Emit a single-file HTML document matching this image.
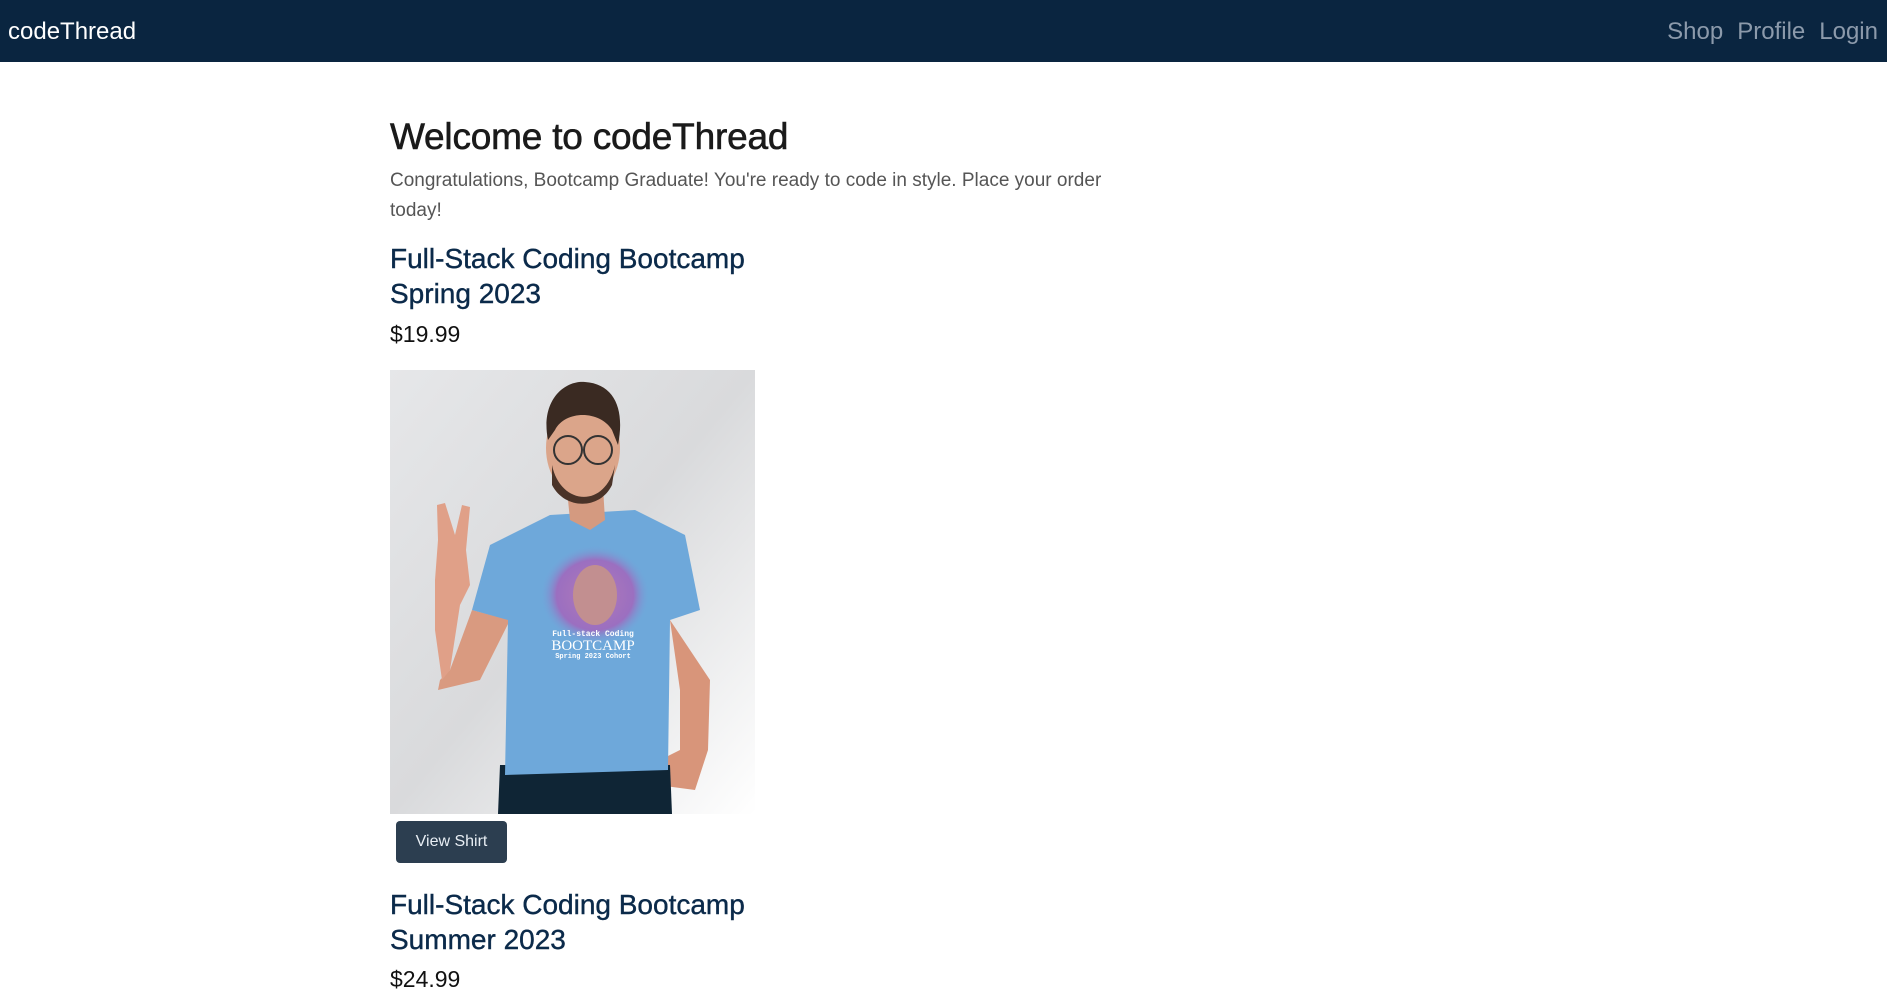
<!DOCTYPE html>
<html><head><meta charset="utf-8"><style>
*{box-sizing:border-box;margin:0;padding:0}
body{width:1887px;height:989px;overflow:hidden;background:#fff;font-family:"Liberation Sans",sans-serif;position:relative}
.nav{position:absolute;left:0;top:0;width:1887px;height:62px;background:#0a2540}
.brand{position:absolute;left:8px;top:18px;color:#fff;font-size:24px}
.links{position:absolute;right:9px;top:18px;color:#8c9aab;font-size:24px;word-spacing:0}
.links span{margin-left:14px}
.t{position:absolute;left:390px;white-space:nowrap}
h1{font-size:37px;font-weight:normal;color:#1a1a1a;letter-spacing:-0.2px;-webkit-text-stroke:0.6px #1a1a1a}
.p{font-size:19px;color:#555;font-weight:normal;line-height:30px}
.h{font-size:28px;color:#0b2a4a;line-height:35px;-webkit-text-stroke:0.4px #0b2a4a}
.pr{font-size:23px;color:#111}
.btn{position:absolute;left:396px;top:821px;width:111px;height:42px;background:#2c3e50;border-radius:4px;color:#e8eef4;font-size:16px;text-align:center;line-height:42px}
</style></head><body>
<div class="nav"><div class="brand">codeThread</div><div class="links"><span>Shop</span><span>Profile</span><span>Login</span></div></div>
<div class="t" style="top:116px"><h1>Welcome to codeThread</h1></div>
<div class="t p" style="top:166px">Congratulations, Bootcamp Graduate! You're ready to code in style. Place your order<br>today!</div>
<div class="t h" style="top:241px">Full-Stack Coding Bootcamp<br>Spring 2023</div>
<div class="t pr" style="top:321px">$19.99</div>
<svg style="position:absolute;left:390px;top:370px" width="365" height="444" viewBox="0 0 365 444">
<defs><linearGradient id="g" x1="0" y1="0" x2="1" y2="1"><stop offset="0" stop-color="#e6e7e9"/><stop offset="0.5" stop-color="#d9dadc"/><stop offset="1" stop-color="#ffffff"/></linearGradient>
<radialGradient id="pg"><stop offset="0" stop-color="#b27ab8"/><stop offset="0.7" stop-color="#9b6fc0"/><stop offset="1" stop-color="#6fa8dc" stop-opacity="0"/></radialGradient></defs>
<rect width="365" height="444" fill="url(#g)"/>
<path d="M82 240 L60 300 L50 310 L48 320 L90 310 L120 250 Z" fill="#d99a80"/>
<path d="M45 210 L48 170 L47 135 L55 133 L65 165 L72 135 L80 137 L76 180 L80 215 L70 235 L60 300 L52 310 L45 260 Z" fill="#e0a088"/>
<path d="M280 250 L320 310 L318 380 L305 420 L245 412 L260 395 L290 380 L290 320 Z" fill="#d8957a"/>
<path d="M110 395 L280 395 L282 444 L108 444 Z" fill="#0f2535"/>
<path d="M160 145 L245 140 L295 165 L310 240 L280 250 L278 400 L115 405 L118 250 L82 240 L100 175 Z" fill="#6ea8da"/>
<path d="M175 100 L212 100 L215 150 L200 160 L180 150 Z" fill="#d49a80"/>
<ellipse cx="193" cy="78" rx="37" ry="50" fill="#dba58a"/>
<path d="M158 70 C150 30 175 10 195 12 C225 14 235 40 228 75 L222 60 C210 40 175 40 165 60 Z" fill="#3a2a22"/>
<path d="M162 95 C170 135 215 140 225 95 L222 115 C210 140 175 140 162 115 Z" fill="#4a3328"/>
<circle cx="178" cy="80" r="14" fill="none" stroke="#333" stroke-width="2"/>
<circle cx="208" cy="80" r="14" fill="none" stroke="#333" stroke-width="2"/>
<ellipse cx="205" cy="225" rx="55" ry="50" fill="url(#pg)"/>
<ellipse cx="205" cy="225" rx="22" ry="30" fill="#c28f90"/>
<text x="203" y="266" text-anchor="middle" font-family="Liberation Mono,monospace" font-size="8" fill="#fff" font-weight="bold">Full-stack Coding</text>
<text x="203" y="280" text-anchor="middle" font-family="Liberation Serif,serif" font-size="15" fill="#fff">BOOTCAMP</text>
<text x="203" y="288" text-anchor="middle" font-family="Liberation Mono,monospace" font-size="7" fill="#fff" font-weight="bold">Spring 2023 Cohort</text>
</svg>
<div class="btn">View Shirt</div>
<div class="t h" style="top:887px">Full-Stack Coding Bootcamp<br>Summer 2023</div>
<div class="t pr" style="top:966px">$24.99</div>
</body></html>
